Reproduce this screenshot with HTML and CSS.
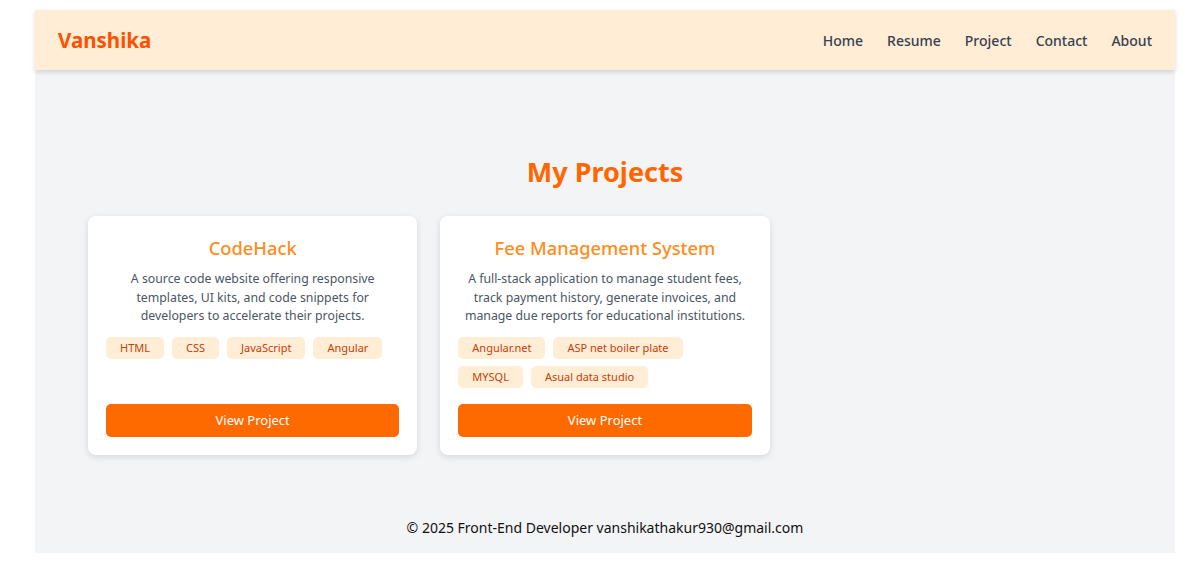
FILE: index.html
```html
<!DOCTYPE html>
<html lang="en">
<head>
<meta charset="utf-8">
<title>Vanshika - Projects</title>
<link rel="stylesheet" href="styles.css">
</head>
<body>
<div class="page">
  <header class="topbar">
    <div class="logo">Vanshika</div>
    <nav class="nav">
      <a href="#">Home</a>
      <a href="#">Resume</a>
      <a href="#">Project</a>
      <a href="#">Contact</a>
      <a href="#">About</a>
    </nav>
  </header>
  <main class="main">
    <h1 class="heading">My Projects</h1>
    <div class="grid">
      <div class="card">
        <h2 class="card-title">CodeHack</h2>
        <p class="card-desc">A source code website offering responsive templates, UI kits, and code snippets for developers to accelerate their projects.</p>
        <div class="tags">
          <span class="tag">HTML</span>
          <span class="tag">CSS</span>
          <span class="tag">JavaScript</span>
          <span class="tag">Angular</span>
        </div>
        <a class="btn" href="#">View Project</a>
      </div>
      <div class="card">
        <h2 class="card-title">Fee Management System</h2>
        <p class="card-desc">A full-stack application to manage student fees, track payment history, generate invoices, and manage due reports for educational institutions.</p>
        <div class="tags">
          <span class="tag">Angular.net</span>
          <span class="tag">ASP net boiler plate</span>
          <span class="tag">MYSQL</span>
          <span class="tag">Asual data studio</span>
        </div>
        <a class="btn" href="#">View Project</a>
      </div>
    </div>
  </main>
  <footer class="footer">© 2025 Front-End Developer vanshikathakur930@gmail.com</footer>
</div>
</body>
</html>
```
FILE: styles.css
```css
* { box-sizing: border-box; }
html, body { margin: 0; padding: 0; background: #ffffff; }
body { font-family: "Noto Sans", "Open Sans", sans-serif; color: #111827; }

.page {
  width: 1140px;
  margin: 10px 0 0 35px;
  background: #f3f4f6;
}

.topbar {
  height: 60px;
  background: #ffedd5;
  display: flex;
  align-items: center;
  justify-content: space-between;
  padding: 0 23px;
  box-shadow: 0 2px 5px rgba(0,0,0,0.15);
  position: relative;
}
.logo {
  font-size: 20.5px;
  font-weight: 700;
  color: #ff4f00;
}
.nav { display: flex; gap: 24px; }
.nav a {
  font-size: 14px;
  font-weight: 500;
  color: #374151;
  text-decoration: none;
}

.main { padding: 84px 0 61px; }
.heading {
  margin: 0 0 26px;
  text-align: center;
  font-size: 27px;
  line-height: 36px;
  font-weight: 700;
  color: #ff6600;
}
.grid {
  width: 1034px;
  margin: 0 auto;
  display: grid;
  grid-template-columns: repeat(3, 1fr);
  gap: 23px;
}
.card {
  background: #ffffff;
  border-radius: 8px;
  box-shadow: 0 2px 6px rgba(0,0,0,0.12);
  padding: 18px;
  display: flex;
  flex-direction: column;
  text-align: center;
}
.card-title {
  margin: 0 0 8px;
  font-size: 18.3px;
  line-height: 28px;
  font-weight: 500;
  color: #ff8c1a;
}
.card-desc {
  margin: 0 0 11px;
  font-size: 12.3px;
  line-height: 18.5px;
  color: #4b5563;
}
.tags {
  display: flex;
  flex-wrap: wrap;
  gap: 7px 8px;
  margin-bottom: 16px;
}
.tag {
  background: #ffedd5;
  color: #c2410c;
  font-size: 11px;
  line-height: 22px;
  height: 22px;
  padding: 0 14px;
  border-radius: 5px;
}
.btn {
  margin-top: auto;
  display: block;
  height: 33px;
  line-height: 33px;
  background: #ff6a00;
  color: #ffffff;
  border-radius: 5px;
  font-size: 13px;
  text-decoration: none;
}

.footer {
  text-align: center;
  font-size: 14px;
  line-height: 24px;
  padding: 0 0 13px;
  color: #111111;
}
```
